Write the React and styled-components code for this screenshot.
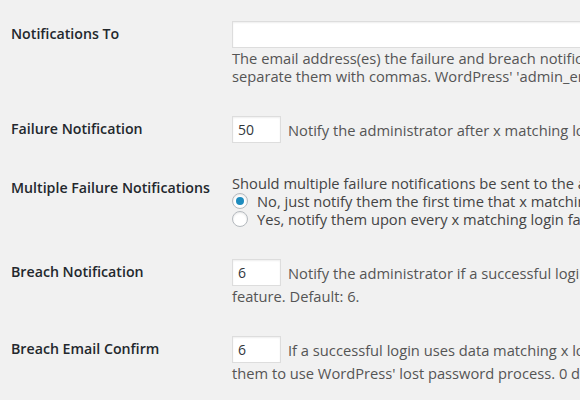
import React from "react";
import styled, { createGlobalStyle } from "styled-components";

const GlobalStyle = createGlobalStyle`
  html, body {
    margin: 0;
    padding: 0;
    background: #f1f1f1;
    overflow: hidden;
  }
  body {
    font-family: "Open Sans", "Liberation Sans", sans-serif;
    font-size: 14px;
    color: #444;
  }
`;

const rows = [
  {
    label: "Notifications To",
    type: "wide",
    desc: [
      "The email address(es) the failure and breach notifications should be sent to. For multiple addresses,",
      "separate them with commas. WordPress' 'admin_email' setting is used if none is provided.",
    ],
  },
  {
    label: "Failure Notification",
    type: "small",
    value: "50",
    desc: [
      "Notify the administrator after x matching login failures. 0 disables this feature. Default: 50.",
    ],
  },
  {
    label: "Multiple Failure Notifications",
    type: "radio",
    question:
      "Should multiple failure notifications be sent to the administrators?",
    options: [
      "No, just notify them the first time that x matching login failures happen.",
      "Yes, notify them upon every x matching login failure.",
    ],
    checked: 0,
  },
  {
    label: "Breach Notification",
    type: "small",
    value: "6",
    desc: [
      "Notify the administrator if a successful login uses data matching x login failures. 0 disables this",
      "feature. Default: 6.",
    ],
  },
  {
    label: "Breach Email Confirm",
    type: "small",
    value: "6",
    desc: [
      "If a successful login uses data matching x login failures, immediately log the user out and require",
      "them to use WordPress' lost password process. 0 disables this feature. Default: 6.",
    ],
  },
];

export default function App() {
  return (
    <>
      <GlobalStyle />
      <S.Table>
        {rows.map((row) => (
          <S.Row key={row.label}>
            <S.Label>{row.label}</S.Label>
            <S.Field>{renderField(row)}</S.Field>
          </S.Row>
        ))}
      </S.Table>
    </>
  );
}

function renderField(row) {
  if (row.type === "wide") {
    return (
      <>
        <S.Input wide defaultValue="" />
        {row.desc.map((line) => (
          <S.Line key={line}>{line}</S.Line>
        ))}
      </>
    );
  }
  if (row.type === "radio") {
    return (
      <>
        <S.Line plain>{row.question}</S.Line>
        {row.options.map((opt, i) => (
          <S.RadioRow key={opt}>
            <S.Radio checked={i === row.checked} />
            {opt}
          </S.RadioRow>
        ))}
      </>
    );
  }
  const [first, ...rest] = row.desc;
  return (
    <>
      <S.InlineLine>
        <S.Input defaultValue={row.value} />
        <span>{first}</span>
      </S.InlineLine>
      {rest.map((line) => (
        <S.Line key={line}>{line}</S.Line>
      ))}
    </>
  );
}

const S = {};

S.Table = styled.div`
  display: flex;
  flex-direction: column;
  width: 1200px;
  padding-top: 5px;
`;

S.Row = styled.div`
  display: grid;
  grid-template-columns: 222px 1fr;
  align-items: start;
`;

S.Label = styled.div`
  padding: 20px 10px 0 11px;
  line-height: 18px;
  font-size: 14.2px;
  font-weight: 600;
  color: #23282d;
  white-space: nowrap;
`;

S.Field = styled.div`
  padding: 15px 10px;
  line-height: 18px;
  font-size: 14.7px;
`;

S.Input = styled.input`
  display: block;
  box-sizing: border-box;
  width: ${(p) => (p.wide ? "420px" : "49px")};
  height: 27px;
  margin: 1px 0;
  padding: 3px 5px 3px 5px;
  border: 1px solid #ddd;
  background: #fff;
  box-shadow: inset 0 1px 2px rgba(0, 0, 0, 0.07);
  font-family: "Open Sans", "Liberation Sans", sans-serif;
  font-size: 14px;
  color: #32373c;
  outline: none;
`;

S.Line = styled.div`
  white-space: nowrap;
  color: ${(p) => (p.plain ? "#444" : "#555")};
`;

S.InlineLine = styled.div`
  display: flex;
  align-items: center;
  gap: 7px;
  white-space: nowrap;
  color: #555;
`;

S.RadioRow = styled.div`
  display: flex;
  align-items: center;
  gap: 9px;
  height: 18px;
  white-space: nowrap;
  color: #444;
`;

S.Radio = styled.span`
  position: relative;
  flex: none;
  box-sizing: border-box;
  width: 16px;
  height: 16px;
  border-radius: 50%;
  border: 1px solid #b4b9be;
  background: #fff;
  box-shadow: inset 0 1px 2px rgba(0, 0, 0, 0.1);

  &::after {
    content: "";
    display: ${(p) => (p.checked ? "block" : "none")};
    position: absolute;
    left: 3px;
    top: 3px;
    width: 8px;
    height: 8px;
    border-radius: 50%;
    background: #1e8cbe;
  }
`;
